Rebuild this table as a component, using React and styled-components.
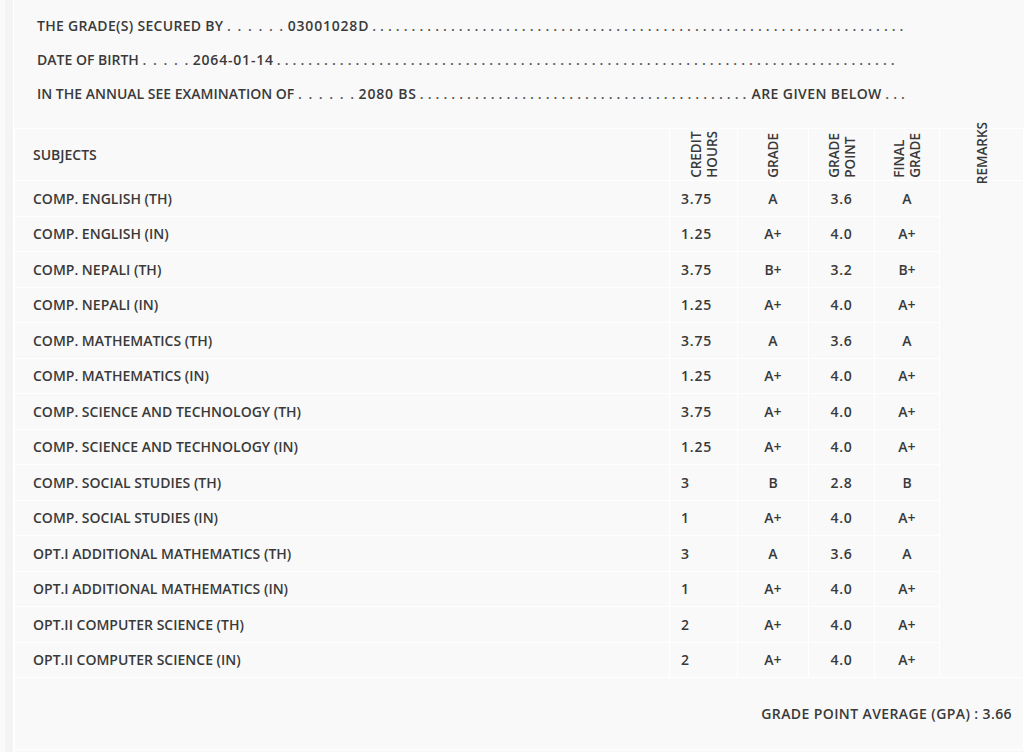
import React from "react";
import styled, { createGlobalStyle } from "styled-components";

const GlobalStyle = createGlobalStyle`
  body {
    margin: 0;
    background: #fafafa;
    font-family: "Open Sans", "DejaVu Sans", sans-serif;
    color: #3a3a3a;
  }
`;

const Sheet = styled.div`
  margin-left: 5px;
  padding-left: 8px;
  background: #f4f4f4;
  min-height: 752px;
`;

const Content = styled.div`
  background: #f9f9f9;
  border-left: 1px solid #ffffff;
  min-height: 752px;
`;

const Intro = styled.div`
  padding: 9px 0 0 23px;
  margin-bottom: 17px;
`;

const IntroLine = styled.div`
  font-size: 14px;
  font-weight: 600;
  line-height: 34px;
  white-space: nowrap;
`;

const Label = styled.span`
  letter-spacing: ${(p) => p.$spacing || "0"};
  margin-left: ${(p) => p.$indent || "0"};
`;

const Value = styled.span`
  letter-spacing: 0.8px;
  margin: 0 3px;
`;

const Dots = styled.span`
  color: #555;
  letter-spacing: ${(p) => (p.$gap ? "1.5px" : "0.2px")};
`;

const Table = styled.table`
  width: 100%;
  border-collapse: collapse;
  table-layout: fixed;
  font-size: 14px;
  font-weight: 600;
`;

const Cell = styled.td`
  border: 1px solid #ffffff;
  height: 34.5px;
  padding: 0 ${(p) => (p.$first ? "18px" : "11px")};
  text-align: ${(p) => p.$align || "left"};
  vertical-align: middle;
  white-space: nowrap;
  letter-spacing: ${(p) => (p.$num ? "0.8px" : "0")};
`;

const HeadCell = styled.th`
  border: 1px solid #ffffff;
  padding: 0 ${(p) => (p.$first ? "18px" : "0")};
  text-align: left;
  font-weight: 600;
`;

const HeadInner = styled.div`
  height: 51px;
  display: flex;
  align-items: ${(p) => (p.$middle ? "center" : "flex-end")};
  justify-content: ${(p) => (p.$left ? "flex-start" : "center")};
  overflow: visible;
`;

const Vertical = styled.div`
  writing-mode: vertical-rl;
  transform: rotate(180deg);
  font-size: 13.5px;
  line-height: 16px;
  padding-top: 2px;
  white-space: nowrap;
  flex-shrink: 0;
`;

const RemarksBody = styled.td`
  border: 1px solid #ffffff;
`;

const GpaCell = styled.td`
  border: 1px solid #ffffff;
  height: 69px;
  text-align: right;
  padding-right: 11px;
  letter-spacing: 0.4px;
`;

const dots = (n) => Array(n).fill(".").join(" ");

const rows = [
  ["COMP. ENGLISH (TH)", "3.75", "A", "3.6", "A"],
  ["COMP. ENGLISH (IN)", "1.25", "A+", "4.0", "A+"],
  ["COMP. NEPALI (TH)", "3.75", "B+", "3.2", "B+"],
  ["COMP. NEPALI (IN)", "1.25", "A+", "4.0", "A+"],
  ["COMP. MATHEMATICS (TH)", "3.75", "A", "3.6", "A"],
  ["COMP. MATHEMATICS (IN)", "1.25", "A+", "4.0", "A+"],
  ["COMP. SCIENCE AND TECHNOLOGY (TH)", "3.75", "A+", "4.0", "A+"],
  ["COMP. SCIENCE AND TECHNOLOGY (IN)", "1.25", "A+", "4.0", "A+"],
  ["COMP. SOCIAL STUDIES (TH)", "3", "B", "2.8", "B"],
  ["COMP. SOCIAL STUDIES (IN)", "1", "A+", "4.0", "A+"],
  ["OPT.I ADDITIONAL MATHEMATICS (TH)", "3", "A", "3.6", "A"],
  ["OPT.I ADDITIONAL MATHEMATICS (IN)", "1", "A+", "4.0", "A+"],
  ["OPT.II COMPUTER SCIENCE (TH)", "2", "A+", "4.0", "A+"],
  ["OPT.II COMPUTER SCIENCE (IN)", "2", "A+", "4.0", "A+"],
];

export default function App() {
  return (
    <>
      <GlobalStyle />
      <Sheet>
        <Content>
          <Intro>
            <IntroLine>
              <Label $spacing="0.3px">THE GRADE(S) SECURED BY</Label>{" "}
              <Dots $gap>{dots(6)}</Dots>
              <Value>03001028D</Value>
              <Dots>{dots(68)}</Dots>
            </IntroLine>
            <IntroLine>
              <Label>DATE OF BIRTH</Label> <Dots $gap>{dots(5)}</Dots>
              <Value>2064-01-14</Value>
              <Dots>{dots(79)}</Dots>
            </IntroLine>
            <IntroLine>
              <Label>IN THE ANNUAL SEE EXAMINATION OF</Label>{" "}
              <Dots $gap>{dots(6)}</Dots>
              <Value>2080 BS</Value>
              <Dots>{dots(42)}</Dots>
              <Label $spacing="0.4px" $indent="5px">
                ARE GIVEN BELOW
              </Label>{" "}
              <Dots>{dots(3)}</Dots>
            </IntroLine>
          </Intro>
          <Table>
            <colgroup>
              <col style={{ width: 655 }} />
              <col style={{ width: 68 }} />
              <col style={{ width: 71 }} />
              <col style={{ width: 66 }} />
              <col style={{ width: 65 }} />
              <col />
            </colgroup>
            <thead>
              <tr>
                <HeadCell $first>
                  <HeadInner $middle $left>
                    SUBJECTS
                  </HeadInner>
                </HeadCell>
                <HeadCell>
                  <HeadInner>
                    <Vertical>
                      CREDIT
                      <br />
                      HOURS
                    </Vertical>
                  </HeadInner>
                </HeadCell>
                <HeadCell>
                  <HeadInner>
                    <Vertical>GRADE</Vertical>
                  </HeadInner>
                </HeadCell>
                <HeadCell>
                  <HeadInner>
                    <Vertical>
                      GRADE
                      <br />
                      POINT
                    </Vertical>
                  </HeadInner>
                </HeadCell>
                <HeadCell>
                  <HeadInner>
                    <Vertical>
                      FINAL
                      <br />
                      GRADE
                    </Vertical>
                  </HeadInner>
                </HeadCell>
                <HeadCell>
                  <HeadInner $middle>
                    <Vertical>REMARKS</Vertical>
                  </HeadInner>
                </HeadCell>
              </tr>
            </thead>
            <tbody>
              {rows.map((r, i) => (
                <tr key={r[0]}>
                  <Cell $first>{r[0]}</Cell>
                  <Cell $num>{r[1]}</Cell>
                  <Cell $align="center">{r[2]}</Cell>
                  <Cell $align="center" $num>
                    {r[3]}
                  </Cell>
                  <Cell $align="center">{r[4]}</Cell>
                  {i === 0 && <RemarksBody rowSpan={rows.length} />}
                </tr>
              ))}
              <tr>
                <GpaCell colSpan={6}>GRADE POINT AVERAGE (GPA) : 3.66</GpaCell>
              </tr>
            </tbody>
          </Table>
        </Content>
      </Sheet>
    </>
  );
}
